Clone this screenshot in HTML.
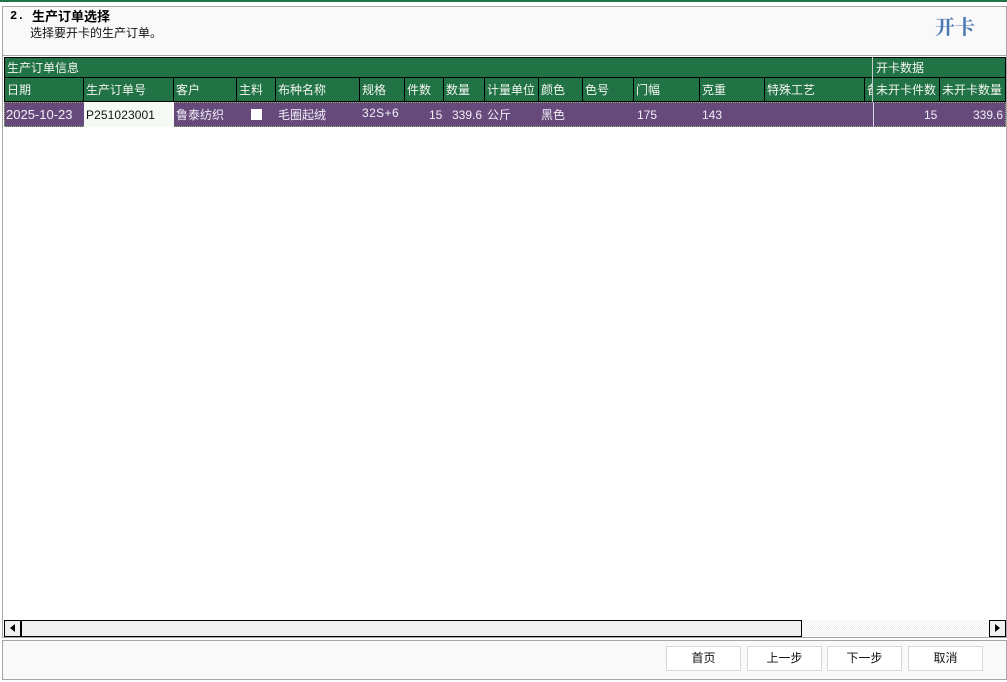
<!DOCTYPE html>
<html><head><meta charset="utf-8">
<style>
html,body{margin:0;padding:0;width:1007px;height:682px;overflow:hidden;background:#fff}
body{position:relative;font-family:"Liberation Sans","Noto Sans CJK SC",sans-serif;font-size:12px}
.a{position:absolute;box-sizing:border-box}
.t{position:absolute;white-space:nowrap;line-height:16px;font-size:12px;color:#f2f5f0}
.h{top:82px}
.d{top:107px;color:#f2eef6}
.l{position:absolute;background:#000;width:1px;top:78px;height:24px}
.btn{position:absolute;top:646px;width:75px;height:25px;box-sizing:border-box;background:#fff;border:1px solid #d8d8d8;text-align:center;line-height:23px;color:#111;font-size:12px}
</style></head><body>
<div class="a" style="left:0;top:0;width:1007px;height:2px;background:#217346"></div>
<div class="a" style="left:2px;top:6px;width:1005px;height:50px;background:#f9f9f9;border:1px solid #a6a6a6;border-right-color:#a6a6a6"></div>
<div class="a" style="left:2px;top:56px;width:1px;height:582px;background:#a6a6a6"></div>
<div class="a" style="left:1006px;top:56px;width:1px;height:582px;background:#a6a6a6"></div>
<div class="a" style="left:2px;top:637px;width:1005px;height:1px;background:#a6a6a6"></div>
<div class="t" style="left:10px;top:8px;font-weight:bold;color:#000;font-family:'Liberation Mono',monospace">2.</div>
<div class="t" style="left:32px;top:9px;font-size:13px;font-weight:bold;color:#000">生产订单选择</div>
<div class="t" style="left:30px;top:25px;color:#111">选择要开卡的生产订单。</div>
<div class="t" style="left:935px;top:16px;font-size:20px;line-height:24px;font-weight:bold;color:#4a78b2;font-family:'Liberation Serif','Noto Serif CJK SC',serif">开卡</div>

<div class="a" style="left:4px;top:57px;width:1002px;height:45px;background:#217346;border:1px solid #000;border-bottom:0"></div>
<div class="a" style="left:4px;top:77px;width:1002px;height:1px;background:#000"></div>
<div class="a" style="left:4px;top:101px;width:1002px;height:1px;background:#000"></div>
<div class="l" style="left:83px"></div><div class="l" style="left:173px"></div><div class="l" style="left:236px"></div><div class="l" style="left:275px"></div><div class="l" style="left:359px"></div><div class="l" style="left:404px"></div><div class="l" style="left:443px"></div><div class="l" style="left:484px"></div><div class="l" style="left:538px"></div><div class="l" style="left:582px"></div><div class="l" style="left:633px"></div><div class="l" style="left:699px"></div><div class="l" style="left:764px"></div><div class="l" style="left:864px"></div><div class="l" style="left:939px"></div>
<div class="t" style="left:7px;top:60px">生产订单信息</div>
<div class="t" style="left:876px;top:60px">开卡数据</div>
<div class="t h" style="left:7px">日期</div>
<div class="t h" style="left:86px">生产订单号</div>
<div class="t h" style="left:176px">客户</div>
<div class="t h" style="left:239px">主料</div>
<div class="t h" style="left:278px">布种名称</div>
<div class="t h" style="left:362px">规格</div>
<div class="t h" style="left:407px">件数</div>
<div class="t h" style="left:446px">数量</div>
<div class="t h" style="left:487px">计量单位</div>
<div class="t h" style="left:541px">颜色</div>
<div class="t h" style="left:585px">色号</div>
<div class="t h" style="left:636px">门幅</div>
<div class="t h" style="left:702px">克重</div>
<div class="t h" style="left:767px">特殊工艺</div>
<div class="a" style="left:865px;top:78px;width:7px;height:23px;overflow:hidden"><div class="t" style="left:2px;top:4px">备注</div></div>
<div class="t h" style="left:876px">未开卡件数</div>
<div class="t h" style="left:942px">未开卡数量</div>

<div class="a" style="left:4px;top:102px;width:1002px;height:25px;background:#664a7c;border:1px dotted #8fb36f"></div>
<div class="a" style="left:84px;top:102px;width:90px;height:25px;background:#f5fbf4"></div>
<div class="t" style="left:6px;top:107px;font-size:13px;color:#f2eef6">2025-10-23</div>
<div class="t" style="left:86px;top:107px;letter-spacing:.1px;color:#111">P251023001</div>
<div class="t d" style="left:176px">鲁泰纺织</div>
<div class="a" style="left:251px;top:109px;width:11px;height:11px;background:#fff"></div>
<div class="t d" style="left:278px">毛圈起绒</div>
<div class="t d" style="left:362px;top:105px;letter-spacing:.4px">32S+6</div>
<div class="t d" style="left:429px">15</div>
<div class="t d" style="left:452px">339.6</div>
<div class="t d" style="left:487px">公斤</div>
<div class="t d" style="left:541px">黑色</div>
<div class="t d" style="left:637px">175</div>
<div class="t d" style="left:702px">143</div>
<div class="t d" style="left:924px">15</div>
<div class="t d" style="left:973px">339.6</div>
<div class="a" style="left:872px;top:57px;width:1px;height:45px;background:#c9c9c9"></div>
<div class="a" style="left:873px;top:102px;width:1px;height:25px;background:#d8d4dc"></div>

<div class="a" style="left:4px;top:620px;width:1002px;height:17px;background:repeating-conic-gradient(#f1f1f1 0 25%,#fff 0 50%) 0 0/2px 2px"></div>
<div class="a" style="left:4px;top:620px;width:798px;height:17px;background:#f0f0f0;border:1px solid #000"></div>
<div class="a" style="left:4px;top:620px;width:18px;height:17px;background:#f0f0f0;border:1px solid #000;border-right-width:2px"></div>
<div class="a" style="left:10px;top:624px;width:0;height:0;border:4px solid transparent;border-right:5px solid #000;border-left:0"></div>
<div class="a" style="left:989px;top:620px;width:17px;height:17px;background:#f0f0f0;border:1px solid #000"></div>
<div class="a" style="left:995px;top:624px;width:0;height:0;border:4px solid transparent;border-left:5px solid #000;border-right:0"></div>

<div class="a" style="left:2px;top:640px;width:1005px;height:40px;background:#f9f9f9;border:1px solid #a6a6a6"></div>
<div class="btn" style="left:666px">首页</div>
<div class="btn" style="left:747px">上一步</div>
<div class="btn" style="left:827px">下一步</div>
<div class="btn" style="left:908px">取消</div>
</body></html>
